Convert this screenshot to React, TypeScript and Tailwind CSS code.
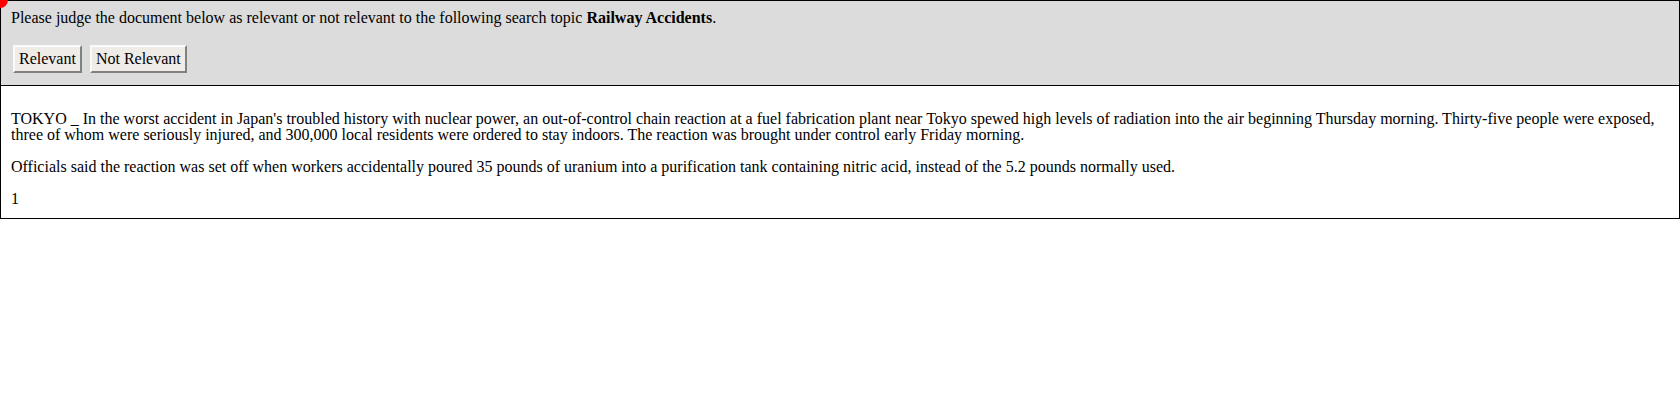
export default function App() {
  return (
    <div className="relative w-[1680px] bg-white text-black" style={{ fontFamily: '"Liberation Serif", "Times New Roman", serif' }}>
      <div className="absolute left-[-8px] top-[-8px] h-[16px] w-[16px] rounded-full bg-[#ff0000] z-10" />
      <div className="border border-black">
        <div className="bg-[#dcdcdc] border-b border-black px-[10px] pt-[8px] pb-[12px]">
          <div className="text-[16px] leading-[18px]">
            Please judge the document below as relevant or not relevant to the following search topic <b>Railway Accidents</b>.
          </div>
          <div className="mt-[18px] flex gap-[8px] pl-[2px]">
            <button className="h-[28px] px-[4px] text-[16px] bg-[#efebe7] border-2 border-t-[#fafafa] border-l-[#fafafa] border-r-[#808080] border-b-[#808080]">Relevant</button>
            <button className="h-[28px] px-[4px] text-[16px] bg-[#efebe7] border-2 border-t-[#fafafa] border-l-[#fafafa] border-r-[#808080] border-b-[#808080]">Not Relevant</button>
          </div>
        </div>
        <div className="px-[10px] pt-[25px] pb-[11px] text-[16px] leading-[16px]">
          <p>
            TOKYO _ In the worst accident in Japan's troubled history with nuclear power, an out-of-control chain reaction at a fuel fabrication plant near Tokyo spewed high levels of radiation into the air beginning Thursday morning. Thirty-five people were exposed, three of whom were seriously injured, and 300,000 local residents were ordered to stay indoors. The reaction was brought under control early Friday morning.
          </p>
          <p className="mt-[16px]">
            Officials said the reaction was set off when workers accidentally poured 35 pounds of uranium into a purification tank containing nitric acid, instead of the 5.2 pounds normally used.
          </p>
          <p className="mt-[16px]">1</p>
        </div>
      </div>
    </div>
  );
}
